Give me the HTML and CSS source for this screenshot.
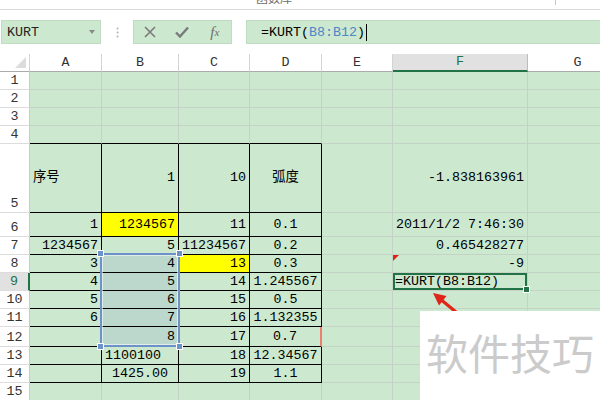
FILE: index.html
```html
<!DOCTYPE html>
<html lang="zh-CN">
<head>
<meta charset="utf-8">
<title>KURT</title>
<link rel="stylesheet" href="styles.css">
</head>
<body>
<div class="app">
  <div class="ribbon-tail">
    <span class="group-label">函数库</span>
    <span class="ribbon-sep"></span>
  </div>

  <div class="fbar">
    <div class="namebox"><span>KURT</span><span class="caret"></span></div>
    <div class="grip">
      <svg width="3" height="11" viewBox="0 0 3 11"><circle cx="1.5" cy="1.5" r="1" fill="#b0b0b0"/><circle cx="1.5" cy="5.5" r="1" fill="#b0b0b0"/><circle cx="1.5" cy="9.5" r="1" fill="#b0b0b0"/></svg>
    </div>
    <div class="btns">
      <span class="btn"><svg width="12" height="12" viewBox="0 0 12 12"><path d="M1 1L11 11M11 1L1 11" stroke="#7a7a7a" stroke-width="1.6" fill="none"/></svg></span>
      <span class="btn"><svg width="14" height="12" viewBox="0 0 14 12"><path d="M1 6.5L5 10.5L13 1.5" stroke="#7a7a7a" stroke-width="2.4" fill="none"/></svg></span>
      <span class="btn fx">f<sub>x</sub></span>
    </div>
    <div class="formula">=KURT(<span class="ref">B8:B12</span>)<span class="cursor"></span></div>
  </div>

  <div class="sheet">
    <div class="corner"></div>
    <div class="ch">A</div><div class="ch">B</div><div class="ch">C</div><div class="ch">D</div><div class="ch">E</div><div class="ch on">F</div><div class="ch">G</div>

    <div class="rh">1</div><div class="c"></div><div class="c"></div><div class="c"></div><div class="c"></div><div class="c"></div><div class="c"></div><div class="c"></div>
    <div class="rh">2</div><div class="c"></div><div class="c"></div><div class="c"></div><div class="c"></div><div class="c"></div><div class="c"></div><div class="c"></div>
    <div class="rh">3</div><div class="c"></div><div class="c"></div><div class="c"></div><div class="c"></div><div class="c"></div><div class="c"></div><div class="c"></div>
    <div class="rh">4</div><div class="c tt"></div><div class="c tt"></div><div class="c tt"></div><div class="c tt"></div><div class="c"></div><div class="c"></div><div class="c"></div>

    <div class="rh">5</div><div class="c t l">序号</div><div class="c t">1</div><div class="c t">10</div><div class="c t m">弧度</div><div class="c"></div><div class="c">-1.838163961</div><div class="c"></div>
    <div class="rh">6</div><div class="c t">1</div><div class="c t y">1234567</div><div class="c t">11</div><div class="c t m">0.1</div><div class="c"></div><div class="c">2011/1/2 7:46:30</div><div class="c"></div>
    <div class="rh">7</div><div class="c t">1234567</div><div class="c t">5</div><div class="c t">11234567</div><div class="c t m">0.2</div><div class="c"></div><div class="c">0.465428277</div><div class="c"></div>
    <div class="rh">8</div><div class="c t">3</div><div class="c t s">4</div><div class="c t y">13</div><div class="c t m">0.3</div><div class="c"></div><div class="c err">-9</div><div class="c"></div>
    <div class="rh on">9</div><div class="c t">4</div><div class="c t s">5</div><div class="c t">14</div><div class="c t m">1.245567</div><div class="c"></div><div class="c l active">=KURT(B8:B12)</div><div class="c"></div>
    <div class="rh">10</div><div class="c t">5</div><div class="c t s">6</div><div class="c t">15</div><div class="c t m">0.5</div><div class="c"></div><div class="c"></div><div class="c"></div>
    <div class="rh">11</div><div class="c t">6</div><div class="c t s">7</div><div class="c t">16</div><div class="c t m">1.132355</div><div class="c"></div><div class="c"></div><div class="c"></div>
    <div class="rh">12</div><div class="c t"></div><div class="c t s">8</div><div class="c t">17</div><div class="c t m mark">0.7</div><div class="c"></div><div class="c"></div><div class="c"></div>
    <div class="rh">13</div><div class="c t"></div><div class="c t l">1100100</div><div class="c t">18</div><div class="c t m">12.34567</div><div class="c"></div><div class="c"></div><div class="c"></div>
    <div class="rh">14</div><div class="c t"></div><div class="c t m">1425.00</div><div class="c t">19</div><div class="c t m">1.1</div><div class="c"></div><div class="c"></div><div class="c"></div>
    <div class="rh">15</div><div class="c"></div><div class="c"></div><div class="c"></div><div class="c"></div><div class="c"></div><div class="c"></div><div class="c"></div>

    <div class="range">
      <span class="h tl"></span><span class="h tr"></span><span class="h bl"></span><span class="h br"></span>
    </div>
  </div>

  <svg class="arrow" width="600" height="400" viewBox="0 0 600 400">
    <path d="M456 312L442 300.6" stroke="#e0251b" stroke-width="3.2" fill="none"/>
    <path d="M433 293L446.5 296L439 305.5Z" fill="#e0251b"/>
  </svg>

  <div class="watermark">软件技巧</div>
</div>
</body>
</html>
```

FILE: styles.css
```css
:root {
  --green: #cce8cf;
  --grid: #c4d3c6;
  --xl: #217346;
}

html, body {
  margin: 0;
  padding: 0;
}

body {
  width: 600px;
  height: 400px;
  overflow: hidden;
  background: #ffffff;
  font-family: "Liberation Mono", "Noto Sans CJK SC", monospace;
  font-size: 13.33px;
  color: #000;
}

.app {
  position: relative;
  width: 600px;
  height: 400px;
  overflow: hidden;
}

/* ribbon remains */
.ribbon-tail {
  display: flex;
  height: 9px;
  border-bottom: 1px solid #d9d9d9;
  overflow: hidden;
}

.group-label {
  margin-left: 256px;
  margin-top: -9px;
  font-family: "Noto Sans CJK SC", sans-serif;
  font-size: 12px;
  line-height: 14px;
  color: #6e6e6e;
}

.ribbon-sep {
  margin-left: auto;
  margin-right: 44px;
  width: 1px;
  height: 5px;
  background: #c8c8c8;
}

/* formula bar */
.fbar {
  display: flex;
  height: 24px;
  margin-top: 10px;
}

.namebox {
  margin-left: 1px;
  width: 100px;
  box-sizing: border-box;
  background: var(--green);
  border: 1px solid #c2dcc4;
  display: flex;
  align-items: center;
  justify-content: space-between;
  padding: 0 5px 0 5px;
  color: #222;
}

.caret {
  width: 0;
  height: 0;
  border-left: 3px solid transparent;
  border-right: 3px solid transparent;
  border-top: 4px solid #8a8a8a;
}

.grip {
  width: 32px;
  display: flex;
  align-items: center;
  justify-content: center;
}

.btns {
  width: 99px;
  box-sizing: border-box;
  background: var(--green);
  border: 1px solid #c2dcc4;
  display: flex;
  padding-left: 0;
}

.btn {
  width: 36px;
  display: flex;
  align-items: center;
  justify-content: center;
}

.fx {
  font-family: "Liberation Serif", serif;
  font-style: italic;
  font-size: 15px;
  color: #6e6e6e;
}

.fx sub {
  font-size: 11px;
  vertical-align: -1px;
}

.formula {
  flex: 1;
  margin-left: 14px;
  box-sizing: border-box;
  background: var(--green);
  border: 1px solid #c2dcc4;
  border-right: none;
  display: flex;
  align-items: center;
  padding-left: 14px;
  white-space: pre;
}

.ref {
  color: #4f86c6;
}

.cursor {
  display: inline-block;
  width: 1px;
  height: 17px;
  background: #000;
  margin-left: 1px;
}

/* sheet */
.sheet {
  position: relative;
  margin-top: 10px;
  width: 628px;
  display: grid;
  grid-template-columns: 30px 72px 77px 71px 72px 71px 135px 100px;
  grid-template-rows: 18px 18px 18px 18px 18px 69px 24px 18px 18px 18px 18px 18px 20px 18px 18px 18px;
  background: var(--green);
}

.sheet > div {
  box-sizing: border-box;
}

.corner {
  position: relative;
  background: #fff;
  border-right: 1px solid #d4d4d4;
  border-bottom: 1px solid #ababab;
}

.corner::after {
  content: "";
  position: absolute;
  right: 3px;
  bottom: 3px;
  width: 0;
  height: 0;
  border-left: 11px solid transparent;
  border-bottom: 11px solid #dcdcdc;
}

.ch {
  background: #fff;
  border-right: 1px solid #d4d4d4;
  border-bottom: 1px solid #ababab;
  display: flex;
  align-items: flex-end;
  justify-content: center;
  line-height: 16px;
  color: #333;
}

.ch.on {
  background: #e1e1e1;
  border-bottom: 2px solid var(--xl);
  border-right-color: #bdbdbd;
  color: var(--xl);
}

.rh {
  background: #fff;
  border-right: 1px solid #c9c9c9;
  border-bottom: 1px solid #dcdcdc;
  display: flex;
  align-items: flex-end;
  justify-content: center;
  line-height: 16px;
  color: #333;
}

.rh.on {
  background: #e1e1e1;
  border-right: 2px solid var(--xl);
  color: var(--xl);
}

.c {
  border-right: 1px solid var(--grid);
  border-bottom: 1px solid var(--grid);
  display: flex;
  align-items: center;
  justify-content: flex-end;
  padding: 0 3px;
  white-space: nowrap;
  line-height: 16px;
}

.c.tt {
  border-bottom-color: #000;
}

.c.t {
  border-right-color: #000;
  border-bottom-color: #000;
}

.c.l {
  justify-content: flex-start;
}

.c.m {
  justify-content: center;
}

.c.y {
  background: #ffff00;
}

.c.s {
  background: #bcd7cb;
}

.c.mark {
  border-right: 2px solid #ee8070;
}

.c.err {
  position: relative;
}

.c.err::before {
  content: "";
  position: absolute;
  left: 0;
  top: 0;
  width: 0;
  height: 0;
  border-top: 6px solid #e0201a;
  border-right: 6px solid transparent;
}

.c.active {
  position: relative;
  z-index: 2;
  padding-left: 2px;
  box-shadow: inset 0 0 0 2px var(--xl);
}

.c.active::after {
  content: "";
  position: absolute;
  right: -3px;
  bottom: -3px;
  width: 5px;
  height: 5px;
  background: var(--xl);
  border: 1px solid #fff;
}

/* referenced range B8:B12 */
.range {
  position: absolute;
  left: 100px;
  top: 199px;
  width: 80px;
  height: 94px;
  box-sizing: border-box;
  border: 2px solid #6c92c9;
  box-shadow: inset 0 0 0 1px rgba(255, 255, 255, 0.55);
  z-index: 3;
}

.h {
  position: absolute;
  width: 5px;
  height: 5px;
  background: #6c92c9;
  border: 1px solid #fff;
}

.h.tl { left: -5px; top: -5px; }
.h.tr { right: -5px; top: -5px; }
.h.bl { left: -5px; bottom: -5px; }
.h.br { right: -5px; bottom: -5px; }

/* annotation overlays */
.arrow {
  position: absolute;
  left: 0;
  top: 0;
  z-index: 5;
}

.watermark {
  position: absolute;
  left: 420px;
  top: 311px;
  right: 0;
  bottom: 0;
  z-index: 6;
  background: #fff;
  box-sizing: border-box;
  padding: 17px 0 0 6px;
  font-family: "Noto Sans CJK SC", sans-serif;
  font-size: 42px;
  line-height: 48px;
  color: #cbcbcb;
  white-space: nowrap;
}
```
